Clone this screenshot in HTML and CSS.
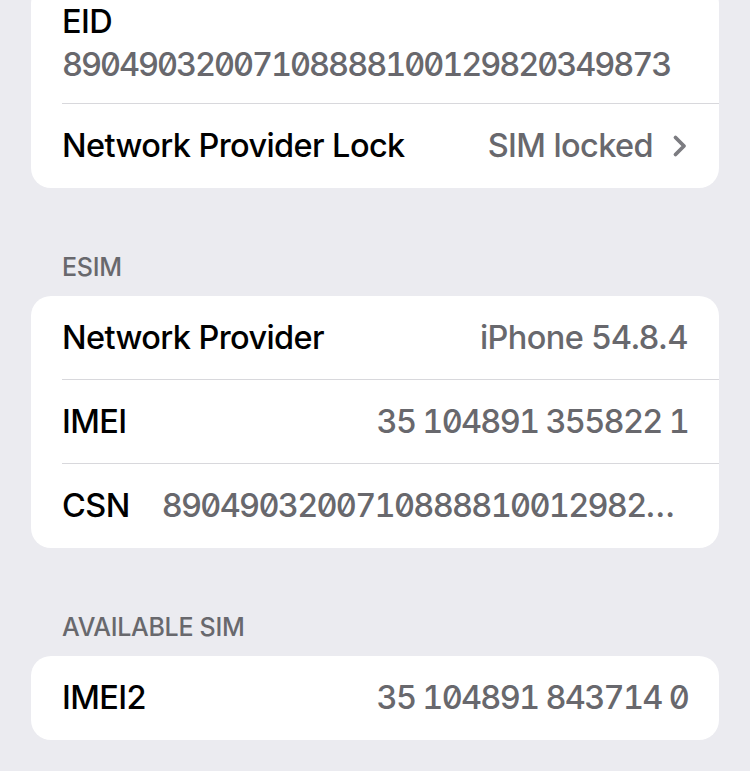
FILE: index.html
```html
<!DOCTYPE html>
<html lang="en">
<head>
    <meta charset="UTF-8">
    <link rel="stylesheet" href="styles.css">
    <title>About - SIM</title>
</head>
<body>

<div class="page">

    <div class="card card-first">
        <div class="row row-sub">
            <span class="label">EID</span>
            <span class="value digits eid">89049032007108888100129820349873</span>
        </div>
        <div class="row">
            <span class="label">Network Provider Lock</span>
            <span class="value">SIM locked
                <svg class="chevron" width="16" height="24" viewBox="0 0 16 24"><path d="M3.5 3.5 L12 12 L3.5 20.5" fill="none" stroke="#7c7c81" stroke-width="3.8" stroke-linecap="round" stroke-linejoin="round"/></svg>
            </span>
        </div>
    </div>

    <h2 class="section-title">ESIM</h2>
    <div class="card">
        <div class="row">
            <span class="label">Network Provider</span>
            <span class="value">iPhone 54.8.4</span>
        </div>
        <div class="row">
            <span class="label">IMEI</span>
            <span class="value digits">35 104891 355822 1</span>
        </div>
        <div class="row">
            <span class="label">CSN</span>
            <span class="value digits trunc">89049032007108888100129820349873</span>
        </div>
    </div>

    <h2 class="section-title">AVAILABLE SIM</h2>
    <div class="card">
        <div class="row">
            <span class="label">IMEI2</span>
            <span class="value digits">35 104891 843714 0</span>
        </div>
    </div>

</div>

</body>
</html>
```

FILE: styles.css
```css
body {
    margin: 0;
    background-color: #ebebf0;
    font-family: Inter, "Liberation Sans", sans-serif;
    color: #000;
}

.page {
    padding: 0 31px;
}

.card {
    background-color: #fff;
    border-radius: 20px;
    overflow: hidden;
}

.card-first {
    margin-top: -16px;
}

.row {
    display: flex;
    align-items: center;
    justify-content: space-between;
    gap: 32px;
    box-sizing: border-box;
    height: 84px;
    margin-left: 31px;
    padding-right: 31px;
    border-bottom: 1px solid #d8d8dc;
    font-size: 32.5px;
    font-weight: 500;
    letter-spacing: -0.6px;
    line-height: 40px;
}

.row:last-child {
    border-bottom: none;
}

.row-sub {
    flex-direction: column;
    align-items: flex-start;
    justify-content: flex-start;
    gap: 3px;
    height: auto;
    padding-top: 18px;
    padding-bottom: 18px;
}

.label {
    flex-shrink: 0;
    white-space: nowrap;
}

.value {
    color: #68686d;
    white-space: nowrap;
    display: flex;
    align-items: center;
    gap: 19px;
}

.digits {
    font-feature-settings: "tnum", "zero";
    letter-spacing: -1.7px;
}

.eid {
    letter-spacing: -2.05px;
}

.trunc {
    display: block;
    overflow: hidden;
    text-overflow: ellipsis;
    min-width: 0;
}

.chevron {
    display: block;
}

.section-title {
    margin: 64px 0 14px 31px;
    font-size: 25px;
    line-height: 30px;
    font-weight: 500;
    letter-spacing: -0.3px;
    color: #68686d;
}
```
